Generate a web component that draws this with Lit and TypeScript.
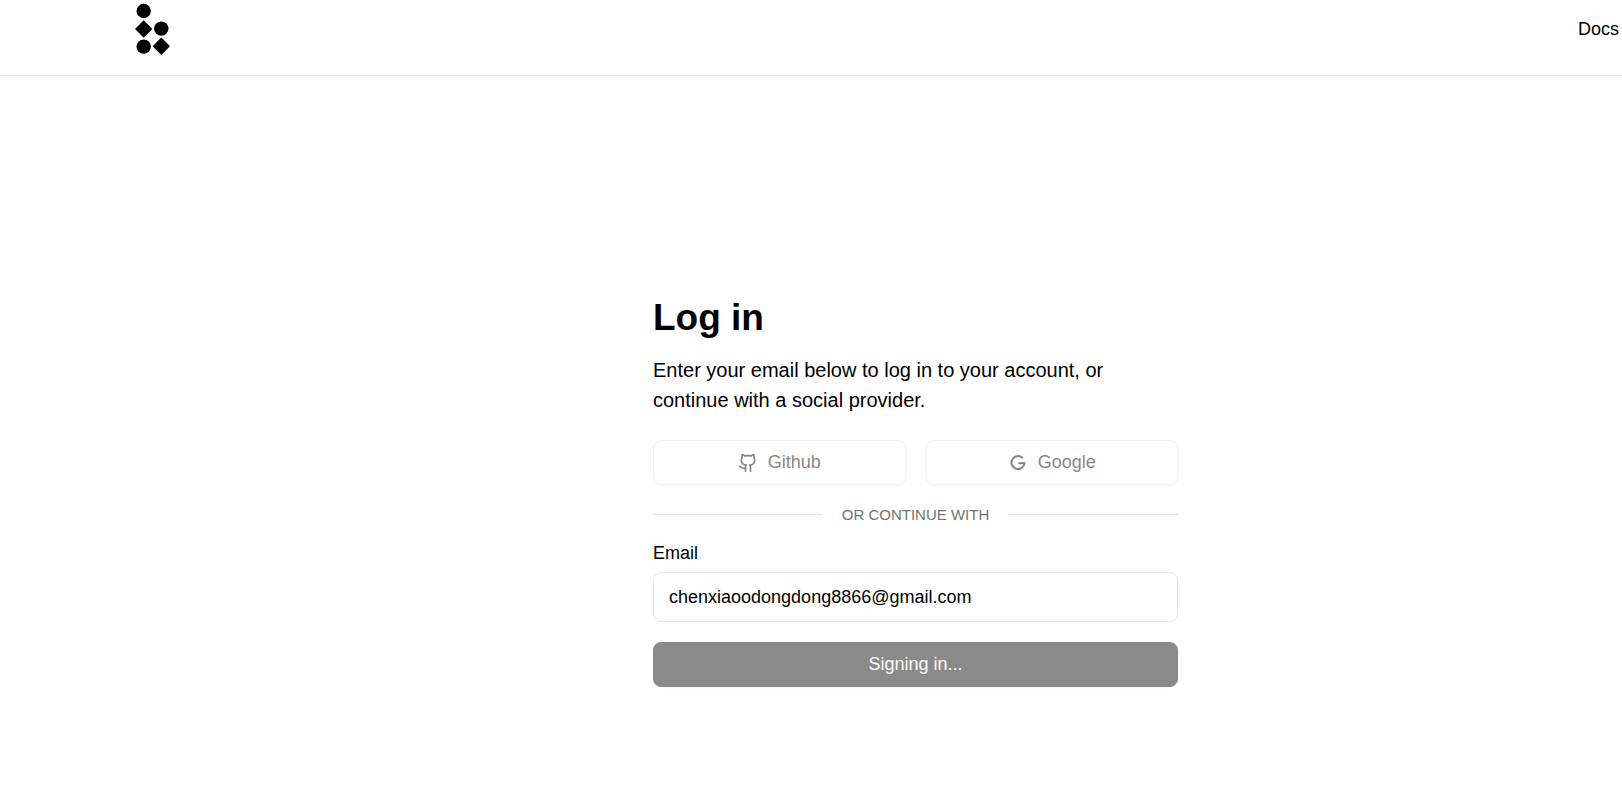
import { LitElement, html, css, svg } from "lit";
import { customElement, state } from "lit/decorators.js";

const githubIcon = svg`
  <path d="M15 22v-4a4.8 4.8 0 0 0-1-3.5c3 0 6-2 6-5.5.08-1.25-.27-2.48-1-3.5.28-1.15.28-2.35 0-3.5 0 0-1 0-3 1.5-2.64-.5-5.36-.5-8 0C6 2 5 2 5 2c-.3 1.15-.3 2.35 0 3.5A5.403 5.403 0 0 0 4 9c0 3.5 3 5.5 6 5.5-.39.49-.68 1.05-.85 1.65-.17.6-.22 1.23-.15 1.85v4"></path>
  <path d="M9 18c-4.51 2-5-2-7-2"></path>`;

const googleIcon = svg`
  <path d="M17.8 6.2A7.8 7.8 0 1 0 19.8 12.3H12.4" fill="none" stroke="currentColor" stroke-width="2.4"></path>`;

@customElement("site-header")
export class SiteHeader extends LitElement {
  static styles = css`
    :host {
      display: block;
      border-bottom: 1px solid #e5e5e5;
    }
    .bar {
      display: flex;
      justify-content: space-between;
      align-items: flex-start;
      height: 75px;
      padding: 0 3px 0 133px;
    }
    .logo {
      display: block;
    }
    .logo svg {
      display: block;
    }
    .link {
      display: block;
      padding-top: 18px;
      font-size: 18px;
      line-height: 22px;
      color: #000;
      text-decoration: none;
    }
  `;

  render() {
    return html`
      <header class="bar">
        <a class="logo" href="#" aria-label="Home">
          <svg width="40" height="58" viewBox="0 0 40 58">
            <circle cx="10.7" cy="11" r="7.2"></circle>
            <path d="M10.7 20.3 19.4 29l-8.7 8.7L2 29z"></path>
            <circle cx="28.3" cy="28.6" r="7.2"></circle>
            <circle cx="10.7" cy="46.6" r="7.2"></circle>
            <path d="M28.3 37.6 37 46.3 28.3 55l-8.7-8.7z"></path>
          </svg>
        </a>
        <nav><a class="link" href="#docs">Docs</a></nav>
      </header>
    `;
  }
}

@customElement("login-form")
export class LoginForm extends LitElement {
  static styles = css`
    :host {
      display: block;
      width: 100%;
      max-width: 525px;
    }
    .form {
      display: grid;
      gap: 20px;
    }
    .title {
      margin: 0;
      font-size: 37px;
      line-height: 45px;
      font-weight: 700;
    }
    .lead {
      margin: 15px 0 5px;
      font-size: 20px;
      line-height: 30px;
    }
    .intro {
      display: flow-root;
    }
    .providers {
      display: grid;
      grid-template-columns: 1fr 1fr;
      gap: 20px;
    }
    .button {
      display: flex;
      align-items: center;
      justify-content: center;
      gap: 10px;
      box-sizing: border-box;
      width: 100%;
      height: 45px;
      padding: 0 20px;
      border: 1px solid #e5e5e5;
      border-radius: 8px;
      background: #fff;
      color: #0a0a0a;
      font: inherit;
      font-size: 18px;
      box-shadow: 0 1px 2px rgba(0, 0, 0, 0.05);
    }
    .button:disabled {
      opacity: 0.5;
    }
    .primary {
      border-color: #171717;
      background: #171717;
      color: #fafafa;
    }
    .stroke {
      fill: none;
      stroke: currentColor;
      stroke-width: 2;
      stroke-linecap: round;
      stroke-linejoin: round;
    }
    .divider {
      display: flex;
      align-items: center;
      gap: 20px;
      font-size: 15px;
      line-height: 19px;
      color: #737373;
      text-transform: uppercase;
    }
    .divider::before,
    .divider::after {
      content: "";
      flex: 1;
      height: 1px;
      background: #e5e5e5;
    }
    .field {
      display: grid;
      gap: 10px;
    }
    .label {
      font-size: 18px;
      line-height: 18px;
    }
    .input {
      box-sizing: border-box;
      width: 100%;
      height: 50px;
      padding: 0 15px;
      border: 1px solid #e5e5e5;
      border-radius: 8px;
      background: #fff;
      color: #000;
      font: inherit;
      font-size: 18px;
      outline: none;
    }
  `;

  @state() private email = "chenxiaoodongdong8866@gmail.com";
  @state() private pending = true;

  private onInput(e: Event) {
    this.email = (e.target as HTMLInputElement).value;
  }

  private onSubmit(e: Event) {
    e.preventDefault();
    this.pending = true;
  }

  render() {
    return html`
      <form class="form" @submit=${this.onSubmit}>
        <div class="intro">
          <h1 class="title">Log in</h1>
          <p class="lead">
            Enter your email below to log in to your account, or continue with a social provider.
          </p>
        </div>
        <div class="providers">
          <button class="button" type="button" ?disabled=${this.pending}>
            <svg class="stroke" width="20" height="20" viewBox="0 0 24 24" aria-hidden="true">${githubIcon}</svg>
            Github
          </button>
          <button class="button" type="button" ?disabled=${this.pending}>
            <svg width="20" height="20" viewBox="0 0 24 24" aria-hidden="true">${googleIcon}</svg>
            Google
          </button>
        </div>
        <div class="divider">Or continue with</div>
        <div class="field">
          <label class="label" for="email">Email</label>
          <input class="input" id="email" type="email" .value=${this.email} @input=${this.onInput} />
        </div>
        <button class="button primary" type="submit" ?disabled=${this.pending}>
          ${this.pending ? "Signing in..." : "Sign in"}
        </button>
      </form>
    `;
  }
}

@customElement("app-root")
export class AppRoot extends LitElement {
  static styles = css`
    :host {
      display: block;
      min-height: 100vh;
      background: #fff;
      color: #000;
      font-family: "Liberation Sans", Arial, sans-serif;
    }
    .main {
      display: flex;
      justify-content: center;
      padding: 219px 0 40px 209px;
    }
  `;

  render() {
    return html`
      <site-header></site-header>
      <main class="main"><login-form></login-form></main>
    `;
  }
}
